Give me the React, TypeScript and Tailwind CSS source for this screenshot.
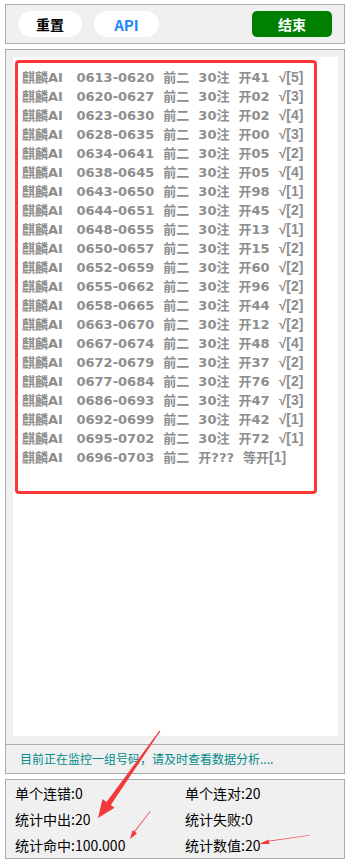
import React from "react";

const rows: [string, string, string][] = [
  ["0613-0620", "41", "5"],
  ["0620-0627", "02", "3"],
  ["0623-0630", "02", "4"],
  ["0628-0635", "00", "3"],
  ["0634-0641", "05", "2"],
  ["0638-0645", "05", "4"],
  ["0643-0650", "98", "1"],
  ["0644-0651", "45", "2"],
  ["0648-0655", "13", "1"],
  ["0650-0657", "15", "2"],
  ["0652-0659", "60", "2"],
  ["0655-0662", "96", "2"],
  ["0658-0665", "44", "2"],
  ["0663-0670", "12", "2"],
  ["0667-0674", "48", "4"],
  ["0672-0679", "37", "2"],
  ["0677-0684", "76", "2"],
  ["0686-0693", "47", "3"],
  ["0692-0699", "42", "1"],
  ["0695-0702", "72", "1"],
];

const cjk = { fontFamily: '"Noto Sans CJK SC", "Noto Sans", sans-serif' };
const lineFont = { fontFamily: '"DejaVu Sans", "Noto Sans CJK SC", sans-serif' };
const tickFont = { fontFamily: '"Liberation Sans", "DejaVu Sans", sans-serif' };

export default function App() {
  return (
    <div className="relative w-[345px] h-[859px] bg-white pl-[5px] pt-[4px] overflow-hidden" style={cjk}>
      {/* top bar */}
      <div className="h-[40px] border border-[#acacac] bg-[#f0f0f0] flex items-center justify-between pl-[12px] pr-[12px]">
        <div className="flex items-center gap-[12px]">
          <button className="w-[64px] h-[26px] rounded-full bg-white text-[14px] font-bold text-black leading-none">重置</button>
          <button className="w-[65px] h-[26px] rounded-full bg-white text-[15px] font-bold text-[#1e88ff] leading-none">API</button>
        </div>
        <button className="w-[80px] h-[26px] rounded-[5px] bg-[#008000] text-[14px] font-bold text-white leading-none">结束</button>
      </div>

      {/* main panel */}
      <div className="mt-[5px] h-[725px] border border-[#acacac] bg-[#f0f0f0] flex flex-col">
        <div className="flex-1 pt-[7px] pl-[7px] pr-[6px] pb-[8px] flex">
          <div className="flex-1 bg-white pt-[3px] pl-[2px]">
            <div className="w-[302px] h-[434px] border-[3px] border-[#ff3636] rounded-[4px] pt-[5px] pl-[4px]">
              {rows.map(([p, k, n]) => (
                <div key={p} className="h-[19px] leading-[19px] text-[13px] font-bold text-[#8e8e8e] whitespace-pre" style={lineFont}>
                  {`麒麟AI   ${p}  前二  30注  开${k}  `}
                  <span className="text-[14px]" style={tickFont}>{`√[${n}]`}</span>
                </div>
              ))}
              <div className="h-[19px] leading-[19px] text-[13px] font-bold text-[#8e8e8e] whitespace-pre" style={lineFont}>
                {"麒麟AI   0696-0703  前二  开???  等开"}
                <span className="text-[14px]" style={tickFont}>[1]</span>
              </div>
            </div>
          </div>
        </div>
        <div className="h-[29px] border-t border-[#acacac] flex items-center pl-[14px] text-[12px] text-[#008b8b]">
          目前正在监控一组号码，请及时查看数据分析....
        </div>
      </div>

      {/* stats panel */}
      <div className="mt-[5px] h-[80px] border border-[#acacac] bg-[#f0f0f0] grid grid-cols-[170px_1fr] auto-rows-[26px] pl-[9px] text-[14px] text-black">
        <div className="flex items-center">单个连错:0</div>
        <div className="flex items-center">单个连对:20</div>
        <div className="flex items-center">统计中出:20</div>
        <div className="flex items-center">统计失败:0</div>
        <div className="flex items-center">统计命中:100.000</div>
        <div className="flex items-center">统计数值:20</div>
      </div>

      {/* annotation arrows */}
      <svg className="absolute left-0 top-0 pointer-events-none" width="345" height="859" viewBox="0 0 345 859">
        <polygon points="160.5,731 110.8,805 114.5,807.8 98,818 102.5,799 106.5,802 159.5,730.5" fill="#f23a3a" />
        <polygon points="150.5,811.5 135,831.8 137,833.5 130,839 132.5,830.5 134.5,831 150,811" fill="#f23a3a" />
        <polygon points="310,835.5 269,841.5 269.5,844 259,844 268.5,839.5 268.8,840.8 310,835" fill="#f23a3a" />
      </svg>
    </div>
  );
}
